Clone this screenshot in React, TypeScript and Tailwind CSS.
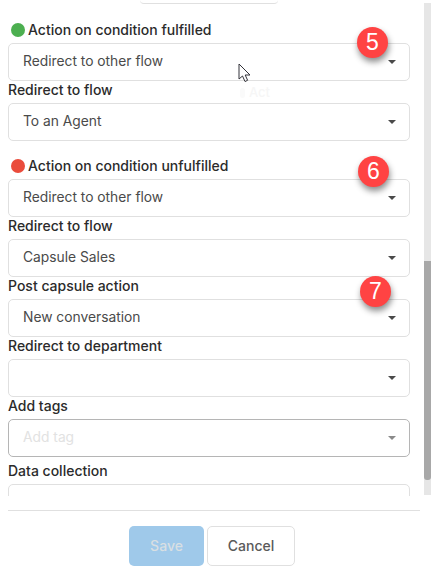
import React from 'react';

const Caret: React.FC<{ muted?: boolean }> = ({ muted }) => (
  <svg width="8" height="4" viewBox="0 0 8 4" className={muted ? 'text-[#8a8a8a]' : 'text-[#4a4a4a]'}>
    <path d="M0 0h8L4 4z" fill="currentColor" />
  </svg>
);

const Label: React.FC<{ text: string; dot?: string }> = ({ text, dot }) => (
  <div className="flex h-[22px] items-center gap-[3px] pb-[4px] text-[14px] font-medium leading-none text-[#2b2b2b]">
    {dot && <span className={`ml-[3px] h-[14px] w-[14px] rounded-full ${dot}`} />}
    <span>{text}</span>
  </div>
);

const Select: React.FC<{ value?: string; placeholder?: string; dark?: boolean }> = ({ value, placeholder, dark }) => (
  <div
    className={`flex h-[38px] items-center justify-between rounded-[5px] border bg-white pl-[14px] pr-[13px] text-[13.8px] ${
      dark ? 'border-[#b5b5b5]' : 'border-[#e0e0e0]'
    }`}
  >
    <span className={`pb-[1px] ${placeholder ? 'text-[#e2e2e2]' : 'text-[#4a4a4a]'}`}>{value || placeholder}</span>
    <Caret muted={dark} />
  </div>
);

const Badge: React.FC<{ n: number; className: string }> = ({ n, className }) => (
  <div
    className={`absolute flex h-[31px] w-[31px] items-center justify-center rounded-full bg-[#ff4343] text-[23px] text-white shadow-[1px_4px_6px_rgba(0,0,0,0.45)] ${className}`}
    style={{ fontFamily: '"Liberation Sans", sans-serif' }}
  >
    {n}
  </div>
);

export default function App() {
  return (
    <div
      className="relative flex h-[573px] w-[431px] flex-col overflow-hidden bg-white"
      style={{ fontFamily: 'Inter, Roboto, sans-serif' }}
    >
      <div className="flex h-[496px] shrink-0 overflow-hidden">
        <div className="flex-1 overflow-hidden pl-2 pr-[14px]">
          <div className="mx-[132px] h-[4px] rounded-b-[5px] border-b border-[#e0e0e0]" />
          <div className="mt-[17px]">
            <Label text="Action on condition fulfilled" dot="bg-[#4caf50]" />
          </div>
          <Select value="Redirect to other flow" />
          <Label text="Redirect to flow" />
          <Select value="To an Agent" />
          <div className="mt-[16px]">
            <Label text="Action on condition unfulfilled" dot="bg-[#ea4c3c]" />
          </div>
          <Select value="Redirect to other flow" />
          <Label text="Redirect to flow" />
          <Select value="Capsule Sales" />
          <Label text="Post capsule action" />
          <Select value="New conversation" />
          <Label text="Redirect to department" />
          <Select />
          <Label text="Add tags" />
          <Select placeholder="Add tag" dark />
          <div className="mt-[5px]">
            <Label text="Data collection" />
          </div>
          <Select />
        </div>
        {/* scrollbar */}
        <div className="mt-[3px] flex h-[492px] w-[7px] shrink-0 flex-col bg-[#e6e6e6]">
          <div className="mt-[258px] h-[219px] rounded-b-[3px] bg-[#a8a8a8]" />
        </div>
      </div>

      <div className="mx-2 mt-[14px] border-t border-[#e0e0e0] mr-[11px]" />

      <div className="mt-[15px] flex justify-center gap-[3px] pr-[7px]">
        <button className="h-[40px] w-[75px] rounded-[5px] bg-[#9fc9ea] pb-[1px] text-[14px] font-medium text-[#d8dfe3]">Save</button>
        <button className="h-[40px] w-[88px] rounded-[5px] border border-[#e0e0e0] bg-white pb-[1px] text-[14px] font-medium text-[#5a5a5a]">
          Cancel
        </button>
      </div>

      <Badge n={5} className="left-[357px] top-[27px]" />
      <Badge n={6} className="left-[358px] top-[156px]" />
      <Badge n={7} className="left-[360px] top-[276px]" />

      {/* drag ghost under the mouse pointer */}
      <div className="absolute left-[240px] top-[83px] flex items-center gap-[4px] text-[13px] font-medium text-[#f6f6f6]">
        <span className="h-[10px] w-[5px] rounded-full bg-[#fafafa]" />
        <span>Act</span>
      </div>

      <svg className="absolute left-[238px] top-[63px]" width="13" height="20" viewBox="0 0 13 20">
        <path d="M1 1v15l3.5-3 2.5 5.5 2.6-1.2-2.4-5.3H12z" fill="#fff" stroke="#33333a" strokeWidth="1" strokeLinejoin="round" />
      </svg>
    </div>
  );
}
